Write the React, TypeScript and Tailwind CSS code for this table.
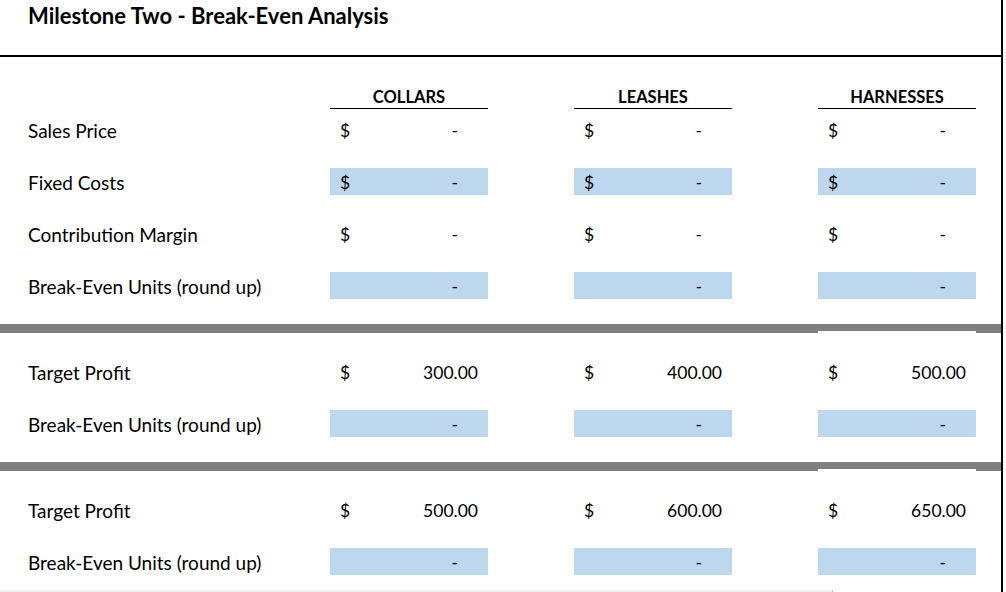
import React from "react";

const COLS = ["COLLARS", "LEASHES", "HARNESSES"];

type Cell = { dollar?: boolean; value: string };
type Row = { label: string; blue: boolean; cells: Cell[] };

const section1: Row[] = [
  { label: "Sales Price", blue: false, cells: [{ dollar: true, value: "-" }, { dollar: true, value: "-" }, { dollar: true, value: "-" }] },
  { label: "Fixed Costs", blue: true, cells: [{ dollar: true, value: "-" }, { dollar: true, value: "-" }, { dollar: true, value: "-" }] },
  { label: "Contribution Margin", blue: false, cells: [{ dollar: true, value: "-" }, { dollar: true, value: "-" }, { dollar: true, value: "-" }] },
  { label: "Break-Even Units (round up)", blue: true, cells: [{ value: "-" }, { value: "-" }, { value: "-" }] },
];
const section2: Row[] = [
  { label: "Target Profit", blue: false, cells: [{ dollar: true, value: "300.00" }, { dollar: true, value: "400.00" }, { dollar: true, value: "500.00" }] },
  { label: "Break-Even Units (round up)", blue: true, cells: [{ value: "-" }, { value: "-" }, { value: "-" }] },
];
const section3: Row[] = [
  { label: "Target Profit", blue: false, cells: [{ dollar: true, value: "500.00" }, { dollar: true, value: "600.00" }, { dollar: true, value: "650.00" }] },
  { label: "Break-Even Units (round up)", blue: true, cells: [{ value: "-" }, { value: "-" }, { value: "-" }] },
];

function DataRow({ row, first }: { row: Row; first?: boolean }) {
  return (
    <div className={`flex h-[27px] ${first ? "mt-[7px]" : "mt-[25px]"}`}>
      <div className="w-[330px] pl-[28px] flex items-end pb-[1px] text-[19px] leading-[22px] whitespace-nowrap">
        {row.label}
      </div>
      <div className="flex gap-[86px]">
        {row.cells.map((c, i) => (
          <div
            key={i}
            className={`w-[158px] h-[27px] flex items-end pb-[2px] text-[17.5px] leading-[20px] ${row.blue ? "bg-[#bdd7ee]" : ""}`}
          >
            <span className="pl-[10px] w-[30px]">{c.dollar ? "$" : ""}</span>
            <span className={`flex-1 text-right ${c.value === "-" ? "pr-[30px]" : "pr-[10px]"}`}>{c.value}</span>
          </div>
        ))}
      </div>
    </div>
  );
}

function GrayBar() {
  return (
    <div className="mt-[25px] h-[9px] bg-[#808080] flex flex-col">
      <div className="h-[7px]" />
      <div className="h-[2px] flex">
        <div className="w-[818px]" />
        <div className="w-[158px] bg-white" />
      </div>
    </div>
  );
}

export default function App() {
  return (
    <div
      className="w-[1006px] h-[592px] bg-white text-black overflow-hidden"
      style={{ fontFamily: "Lato, 'Open Sans', sans-serif" }}
    >
      <div className="w-[1003px] h-[592px] border-r-2 border-black flex flex-col">
        <div className="h-[57px] border-b-2 border-black pl-[28px] pt-[3px]">
          <div className="text-[22px] leading-[26px] font-bold whitespace-nowrap">Milestone Two - Break-Even Analysis</div>
        </div>
        <div className="flex h-[52px]">
          <div className="w-[330px]" />
          <div className="flex gap-[86px]">
            {COLS.map((c) => (
              <div
                key={c}
                className="w-[158px] h-[52px] border-b border-black flex items-end justify-center pb-[1px] text-[16.5px] leading-[20px] font-bold"
              >
                {c}
              </div>
            ))}
          </div>
        </div>
        {section1.map((r, i) => (
          <DataRow key={i} row={r} first={i === 0} />
        ))}
        <GrayBar />
        {section2.map((r, i) => (
          <DataRow key={i} row={r} />
        ))}
        <GrayBar />
        {section3.map((r, i) => (
          <DataRow key={i} row={r} />
        ))}
        <div className="h-[15px]" />
        <div className="h-[2px] w-[833px] bg-[#f2f2f2] border-r border-[#bfbfbf]" />
      </div>
    </div>
  );
}
